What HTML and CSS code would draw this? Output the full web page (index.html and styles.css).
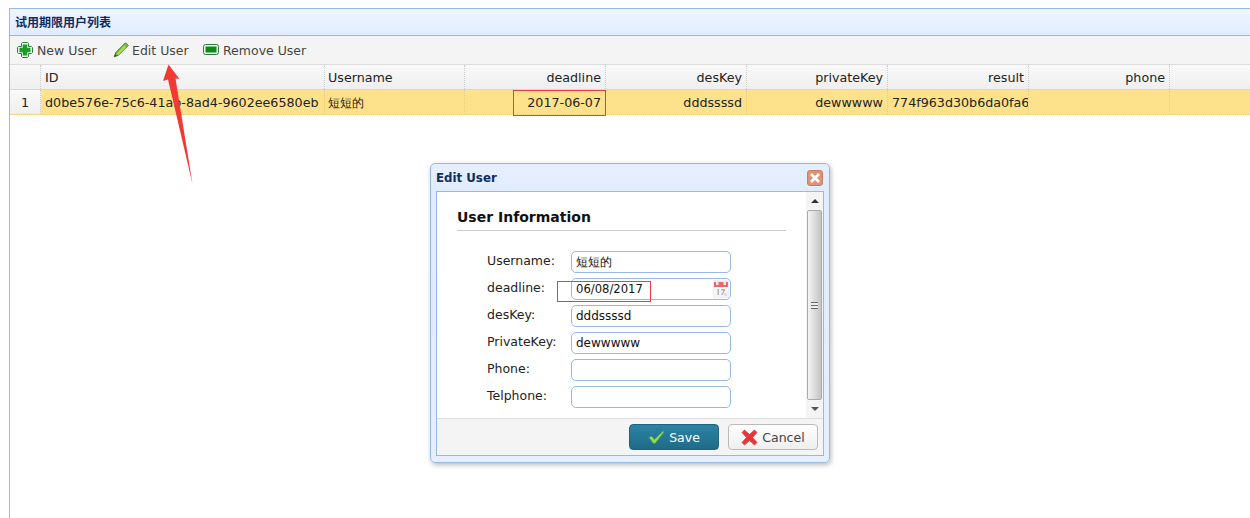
FILE: index.html
```html
<!DOCTYPE html>
<html lang="zh">
<head>
  <meta charset="UTF-8" />
  <title>试用期限用户列表</title>
  <link rel="stylesheet" href="styles.css">
</head>
<body>
  <div class="panel">
    <div class="panel-title">试用期限用户列表</div>
    <div class="toolbar">
      <a class="tool tool-new">
        <svg width="16" height="16" viewBox="0 0 16 16"><path d="M5.500 .5h5l1 1v3h3l1 1v5l-1 1h-3v3l-1 1h-5l-1-1v-3h-3l-1-1v-5l1-1h3v-3z" fill="#e8f4e8" stroke="#2c7a44"/><path d="M5.800 2.500h4.400v3.300h3.300v4.400h-3.300v3.300h-4.400v-3.300h-3.300v-4.400h3.300z" fill="#1c9a2a"/></svg>
        New User
      </a>
      <a class="tool tool-edit">
        <svg width="16" height="16" viewBox="0 0 16 16"><path d="M12.500 .8l2.700 2.700-9.500 9.500-4.500 1.800 1.800-4.500z" fill="#7ec23a" stroke="#3e7d1c"/><path d="M11 3.500l2 2-7.500 7.500-1.500-1.500z" fill="#a6dc5c"/><path d="M1.300 14.800l.8-2.600 1.800 1.800z" fill="#444"/></svg>
        Edit User
      </a>
      <a class="tool tool-remove">
        <svg width="16" height="16" viewBox="0 0 16 16"><rect x=".5" y="2.500" width="15" height="10" rx="2" fill="#eef6ee" stroke="#2c7a44"/><rect x="2.500" y="4.500" width="11" height="6" fill="#0c8a14"/></svg>
        Remove User
      </a>
    </div>
    <div class="grid-row grid-head">
      <div class="cell cell-num"></div>
      <div class="cell cell-id">ID</div>
      <div class="cell cell-user">Username</div>
      <div class="cell cell-r">deadline</div>
      <div class="cell cell-r">desKey</div>
      <div class="cell cell-r">privateKey</div>
      <div class="cell cell-r">result</div>
      <div class="cell cell-r">phone</div>
      <div class="cell cell-rest"></div>
    </div>
    <div class="grid-row grid-selected">
      <div class="cell cell-num">1</div>
      <div class="cell cell-id">d0be576e-75c6-41ab-8ad4-9602ee6580eb</div>
      <div class="cell cell-user cell-cjk">短短的</div>
      <div class="cell cell-r">2017-06-07</div>
      <div class="cell cell-r">dddssssd</div>
      <div class="cell cell-r">dewwwww</div>
      <div class="cell cell-r">774f963d30b6da0fa6</div>
      <div class="cell cell-r"></div>
      <div class="cell cell-rest"></div>
    </div>
  </div>

  <div class="mark mark-cell"></div>
  <svg class="arrow" width="40" height="125" viewBox="0 0 40 125"><path d="M8.500 .5L3 17l5-1.500L32.500 120 15.500 14.500l4 .5z" fill="#f23a35"/></svg>

  <div class="dialog">
    <div class="dialog-title">
      <span>Edit User</span>
      <span class="dialog-close">
        <svg width="12" height="12" viewBox="0 0 12 12"><path d="M2 2l8 8M10 2l-8 8" stroke="#fff" stroke-width="2.600"/></svg>
      </span>
    </div>
    <div class="dialog-inner">
      <div class="dialog-body">
        <div class="form-area">
          <h3 class="form-title">User Information</h3>
          <div class="form-grid">
            <label>Username:</label><div class="field">短短的</div>
            <label>deadline:</label>
            <div class="field field-date">06/08/2017
              <svg class="cal" width="16" height="18" viewBox="0 0 16 18"><rect width="16" height="18" fill="#eaf0f7"/><rect x="1" y="2" width="14" height="5" fill="#e8696b"/><rect x="3" y="1" width="2.500" height="4" fill="#eee8e4"/><rect x="10.500" y="1" width="2.500" height="4" fill="#eee8e4"/><rect x="1" y="7" width="14" height="10" fill="#f6f6f6"/><rect x="4.500" y="9" width="1.500" height="6" fill="#b4b4b4"/><path d="M8 9h4v1.500L9.500 15H8l2.400-4.500H8z" fill="#b4b4b4"/><circle cx="12.500" cy="14.500" r="2" fill="#e2e2e2"/></svg>
            </div>
            <label>desKey:</label><div class="field">dddssssd</div>
            <label>PrivateKey:</label><div class="field">dewwwww</div>
            <label>Phone:</label><div class="field"></div>
            <label>Telphone:</label><div class="field"></div>
          </div>
        </div>
        <div class="scrollbar">
          <div class="scroll-btn"><span class="tri-up"></span></div>
          <div class="scroll-thumb">
            <span class="grip"></span>
          </div>
          <div class="scroll-btn"><span class="tri-down"></span></div>
        </div>
      </div>
      <div class="dialog-foot">
        <a class="btn btn-save">
          <svg width="17" height="16" viewBox="0 0 17 16"><path d="M1 8.500l2.500-1.500 3 3.500L15 2l1 1-9 11.500h-1.500z" fill="#8ce04c" stroke="#4da52c" stroke-width=".6"/></svg>
          Save
        </a>
        <a class="btn btn-cancel">
          <svg width="17" height="17" viewBox="0 0 17 17"><path d="M3.500 1L8.500 5.500 13.500 1 16 3.500 11.500 8.500 16 13.500 13.500 16 8.500 11.500 3.500 16 1 13.500 5.500 8.500 1 3.500z" fill="#e8373a" stroke="#c22a2c" stroke-width=".6" stroke-linejoin="round"/></svg>
          Cancel
        </a>
      </div>
    </div>
  </div>
  <div class="mark mark-date"></div>
</body>
</html>
```

FILE: styles.css
```css
html, body {
  height: 100%;
}
body {
  margin: 0;
  padding: 8px 0 0 9px;
  box-sizing: border-box;
  background-color: white;
  font-family: 'DejaVu Sans', Verdana, sans-serif;
  font-size: 12.500px;
  color: #222;
  overflow: hidden;
}
.panel {
  height: 100%;
  border-left: 1px solid #95b8e7;
  border-top: 1px solid #95b8e7;
}
.panel-title {
  height: 26px;
  line-height: 26px;
  padding-left: 5px;
  background: linear-gradient(#eff5ff, #e0ecff);
  border-bottom: 1px solid #95b8e7;
  font-family: 'Noto Sans CJK SC', sans-serif;
  font-size: 12px;
  font-weight: bold;
  color: #0e2d5f;
}
.toolbar {
  display: flex;
  height: 28px;
  align-items: center;
  background-color: #f4f4f4;
  border-bottom: 1px solid #ddd;
  padding-left: 7px;
}
.tool {
  display: flex;
  align-items: center;
  gap: 4px;
  color: #444;
}
.tool-new { width: 96px; }
.tool-edit { width: 90px; gap: 3px; }
.grid-row {
  display: flex;
  height: 25px;
  line-height: 26px;
  box-sizing: border-box;
  font-size: 12.700px;
}
.grid-head {
  background: linear-gradient(#f9f9f9, #efefef);
  border-bottom: 1px solid #e3d9a8;
}
.grid-selected {
  background-color: #fee28b;
  border-bottom: 1px dotted #ccc;
}
.cell {
  box-sizing: border-box;
  width: 141px;
  padding: 0 4px;
  border-right: 1px dotted #ccc;
  white-space: nowrap;
  overflow: hidden;
}
.cell-r { text-align: right; }
.cell-num {
  width: 31px;
  text-align: center;
  background: linear-gradient(#f9f9f9, #efefef);
}
.cell-id { width: 284px; }
.cell-user { width: 140px; padding-left: 3px; }
.cell-cjk { font-size: 12px; }
.cell-rest { flex: 1; border-right: none; }

/* red marks drawn over the screenshot */
.mark {
  position: absolute;
  box-sizing: border-box;
  border: 1px solid #ee3b3b;
}
.mark-cell { left: 513px; top: 90px; width: 93px; height: 26px; }
.mark-date { left: 557px; top: 281px; width: 94px; height: 21px; }
.arrow {
  position: absolute;
  left: 160px;
  top: 64px;
}

.dialog {
  position: absolute;
  left: 430px;
  top: 163px;
  width: 400px;
  height: 300px;
  box-sizing: border-box;
  display: flex;
  flex-direction: column;
  padding: 0 5px 6px;
  border: 1px solid #95b8e7;
  border-radius: 5px;
  background: linear-gradient(#e6efff, #e0ecff 30px, #e6effd);
  box-shadow: 1px 2px 5px #bbb;
}
.dialog-title {
  display: flex;
  height: 27px;
  flex: none;
  align-items: center;
  justify-content: space-between;
  font-size: 11.800px;
  font-weight: bold;
  color: #0e2d5f;
}
.dialog-close {
  display: flex;
  width: 16px;
  height: 16px;
  align-items: center;
  justify-content: center;
  margin-right: 1px;
  background-color: #dc9478;
  border: 1px solid #c87c62;
  border-radius: 3px;
  box-sizing: border-box;
}
.dialog-inner {
  flex: 1;
  display: flex;
  flex-direction: column;
  border: 1px solid #95b8e7;
  background-color: white;
  min-height: 0;
}
.dialog-body {
  flex: 1;
  display: flex;
  min-height: 0;
}
.form-area {
  flex: 1;
  padding: 17px 20px 0;
}
.form-title {
  margin: 0;
  padding-bottom: 5px;
  height: 16px;
  line-height: 17px;
  font-size: 14px;
  border-bottom: 1px solid #ccc;
  color: #111;
}
.form-grid {
  display: grid;
  grid-template-columns: 84px 160px;
  grid-auto-rows: 22px;
  row-gap: 5px;
  margin: 20px 0 0 30px;
}
.form-grid label {
  line-height: 20px;
  white-space: nowrap;
}
.field {
  box-sizing: border-box;
  position: relative;
  height: 22px;
  line-height: 21px;
  padding-left: 4px;
  border: 1px solid #95b8e7;
  border-radius: 5px;
  font-size: 12px;
  color: #111;
}
.field-date { font-size: 11.600px; }
.cal {
  position: absolute;
  right: 1px;
  top: 1px;
}
.scrollbar {
  display: flex;
  flex-direction: column;
  width: 17px;
  flex: none;
  background-color: #f4f4f4;
}
.scroll-btn {
  display: flex;
  height: 18px;
  flex: none;
  align-items: center;
  justify-content: center;
}
.tri-up {
  border: 4px solid transparent;
  border-top: none;
  border-bottom: 4px solid #333;
}
.tri-down {
  border: 4px solid transparent;
  border-bottom: none;
  border-top: 4px solid #555;
}
.scroll-thumb {
  flex: 1;
  display: flex;
  align-items: center;
  justify-content: center;
  margin: 0 1px;
  background: linear-gradient(to right, #f4f4f4, #c4c4c4);
  border: 1px solid #aaa;
  border-radius: 2px;
}
.grip {
  width: 7px;
  height: 7px;
  background: repeating-linear-gradient(#666 0 1px, #eee 1px 3px);
}
.dialog-foot {
  display: flex;
  height: 36px;
  flex: none;
  align-items: center;
  justify-content: flex-end;
  gap: 9px;
  padding-right: 5px;
  background-color: #f4f4f4;
  border-top: 1px solid #ddd;
}
.btn {
  display: flex;
  box-sizing: border-box;
  width: 90px;
  height: 26px;
  align-items: center;
  justify-content: center;
  gap: 4px;
  border-radius: 4px;
}
.btn-save {
  background: linear-gradient(#2b83a3, #1f6b87);
  border: 1px solid #1d6580;
  color: white;
}
.btn-cancel {
  background: linear-gradient(white, #eee);
  border: 1px solid #bbb;
  color: #444;
}
```
